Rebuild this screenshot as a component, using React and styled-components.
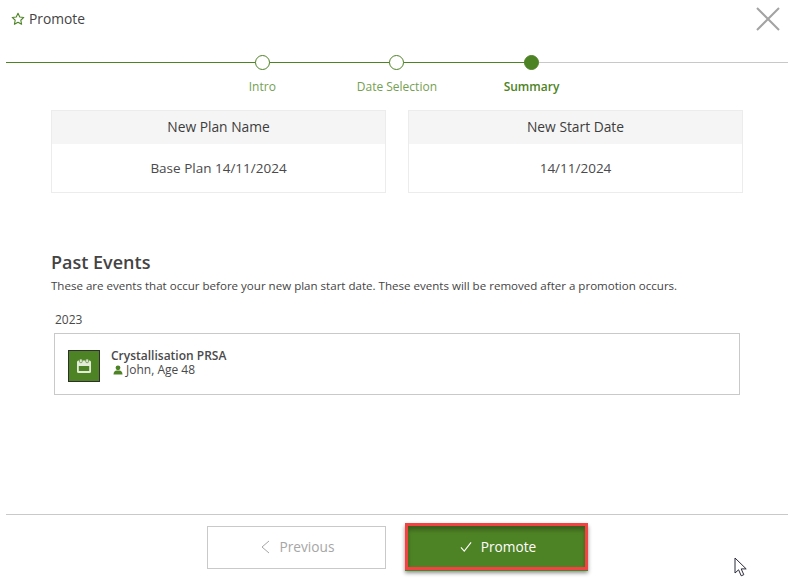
import styled, { createGlobalStyle } from "styled-components";

const GlobalStyle = createGlobalStyle`
  html, body {
    margin: 0;
    padding: 0;
    background: #fff;
  }
  body {
    font-family: "Open Sans", "Liberation Sans", sans-serif;
    color: #444;
  }
  * {
    box-sizing: border-box;
  }
`;

const GREEN = "#4e8325";

const Page = styled.div`
  position: relative;
  width: 793px;
  height: 585px;
  overflow: hidden;
  display: flex;
  flex-direction: column;
  padding: 0 5px 0 6px;
`;

const Header = styled.header`
  display: flex;
  align-items: center;
  justify-content: space-between;
  height: 38px;
  padding: 0 8px 0 5px;
`;

const HeaderTitle = styled.div`
  display: flex;
  align-items: center;
  gap: 4px;
  padding-bottom: 1px;
  font-size: 13.8px;
  font-weight: 500;
  color: #444;
`;

const CloseIcon = styled.svg`
  display: block;
  width: 24px;
  height: 24px;
  stroke: #a3a3a3;
  stroke-width: 2;
  fill: none;
`;

const Stepper = styled.div`
  display: grid;
  grid-template-columns: repeat(3, 134.6px);
  padding-left: 189px;
  margin-top: 17px;
  height: 40px;
  background:
    linear-gradient(to right, ${GREEN} 525px, #c8c8c8 525px) 0 7px / 100% 1px no-repeat;
`;

const Step = styled.div`
  display: flex;
  flex-direction: column;
  align-items: center;
`;

const StepDot = styled.span`
  width: 15px;
  height: 15px;
  border-radius: 50%;
  border: 1.5px solid ${GREEN};
  background: ${(p) => (p.$active ? GREEN : "#fff")};
`;

const StepLabel = styled.span`
  margin-top: 9px;
  font-size: 12px;
  line-height: 16px;
  white-space: nowrap;
  font-weight: ${(p) => (p.$active ? 600 : 400)};
  color: ${(p) => (p.$active ? GREEN : "#74a052")};
`;

const Content = styled.main`
  flex: 1;
  padding: 15px 45px 0;
`;

const Cards = styled.div`
  display: grid;
  grid-template-columns: 335px 335px;
  gap: 22px;
`;

const Card = styled.section`
  border: 1px solid #ececec;
  height: 83px;
`;

const CardHead = styled.div`
  height: 33px;
  display: flex;
  align-items: center;
  justify-content: center;
  padding-bottom: 2px;
  background: #f5f5f5;
  font-size: 13.8px;
  font-weight: 500;
  color: #3d3d3d;
`;

const CardValue = styled.div`
  height: 48px;
  display: flex;
  align-items: center;
  justify-content: center;
  font-size: 13.5px;
  color: #4a4a4a;
`;

const SectionTitle = styled.h2`
  margin: 57px 0 0;
  font-size: 18px;
  line-height: 24px;
  font-weight: 600;
  color: #444;
`;

const Description = styled.p`
  margin: 4px 0 0;
  font-size: 11.55px;
  line-height: 16px;
  color: #444;
  white-space: nowrap;
`;

const Year = styled.div`
  margin: 18px 0 0 4px;
  font-size: 12px;
  line-height: 16px;
  color: #4a4a4a;
`;

const EventRow = styled.div`
  margin: 5px 3px 0 3px;
  height: 62px;
  border: 1px solid #c9c9c9;
  display: flex;
  align-items: center;
  gap: 11px;
  padding: 3px 0 0 13px;
`;

const EventIcon = styled.div`
  width: 32px;
  height: 32px;
  background: ${GREEN};
  border: 1px solid #2f2f2f;
  display: flex;
  align-items: center;
  justify-content: center;
`;

const EventText = styled.div`
  display: flex;
  flex-direction: column;
  margin-top: -6px;
`;

const EventTitle = styled.div`
  font-size: 12px;
  line-height: 15px;
  font-weight: 600;
  color: #4a4a4a;
`;

const EventPerson = styled.div`
  display: flex;
  align-items: center;
  gap: 3px;
  padding-left: 2px;
  font-size: 12px;
  line-height: 14px;
  color: #4a4a4a;
`;

const Footer = styled.footer`
  height: 71px;
  border-top: 1px solid #c9c9c9;
  display: flex;
  align-items: flex-start;
  justify-content: center;
  gap: 19px;
  padding: 8px 0 0 1px;
`;

const Button = styled.button`
  font-family: inherit;
  display: flex;
  align-items: center;
  justify-content: center;
  gap: 9px;
  font-size: 13.7px;
`;

const PreviousButton = styled(Button)`
  width: 179px;
  height: 43px;
  margin-top: 3px;
  padding: 0 0 2px 1px;
  background: #fff;
  border: 1px solid #c9c9c9;
  color: #a6a6a6;
`;

const PromoteButton = styled(Button)`
  width: 183px;
  height: 47px;
  padding: 0 0 0 3px;
  background: ${GREEN};
  border: 3px solid #f44242;
  color: #fff;
  box-shadow: 0 1px 0 ${GREEN}, 0 3px 4px rgba(0, 0, 0, 0.45), inset 0 4px 4px rgba(0, 0, 0, 0.28);
`;

const Cursor = styled.svg`
  position: absolute;
  left: 734px;
  top: 557px;
  width: 15px;
  height: 21px;
`;

const StarIcon = () => (
  <svg width="14" height="14" viewBox="0 0 14 14" fill="none" stroke={GREEN} strokeWidth="1.1">
    <path d="M7 1.2l1.75 3.75 4.05.5-3 2.8.8 4.05L7 10.3l-3.6 2 .8-4.05-3-2.8 4.05-.5z" strokeLinejoin="round" />
  </svg>
);

const CalendarIcon = () => (
  <svg width="16" height="16" viewBox="0 0 16 16" fill="none">
    <rect x="1" y="2.5" width="14" height="12.5" rx="1.5" fill="#e3ecd8" />
    <rect x="2.8" y="8" width="10.4" height="5" fill={GREEN} />
    <rect x="3.6" y="1" width="2.6" height="3.6" rx="0.8" fill="#e3ecd8" stroke={GREEN} strokeWidth="0.7" />
    <rect x="9.8" y="1" width="2.6" height="3.6" rx="0.8" fill="#e3ecd8" stroke={GREEN} strokeWidth="0.7" />
  </svg>
);

const PersonIcon = () => (
  <svg width="10" height="10" viewBox="0 0 10 10" fill={GREEN}>
    <circle cx="5" cy="2.8" r="2.4" />
    <path d="M0.5 9.5c0-2.6 1.6-3.6 3-3.9h3c1.4.3 3 1.3 3 3.9z" />
  </svg>
);

const steps = [
  { label: "Intro" },
  { label: "Date Selection" },
  { label: "Summary", active: true },
];

const App = () => {
  return (
    <Page>
      <GlobalStyle />
      <Header>
        <HeaderTitle>
          <StarIcon />
          Promote
        </HeaderTitle>
        <CloseIcon viewBox="0 0 24 24">
          <path d="M1 1l22 22M23 1L1 23" />
        </CloseIcon>
      </Header>

      <Stepper>
        {steps.map((step) => (
          <Step key={step.label}>
            <StepDot $active={step.active} />
            <StepLabel $active={step.active}>{step.label}</StepLabel>
          </Step>
        ))}
      </Stepper>

      <Content>
        <Cards>
          <Card>
            <CardHead>New Plan Name</CardHead>
            <CardValue>Base Plan 14/11/2024</CardValue>
          </Card>
          <Card>
            <CardHead>New Start Date</CardHead>
            <CardValue>14/11/2024</CardValue>
          </Card>
        </Cards>

        <SectionTitle>Past Events</SectionTitle>
        <Description>
          These are events that occur before your new plan start date. These events will be removed after a promotion occurs.
        </Description>

        <Year>2023</Year>
        <EventRow>
          <EventIcon>
            <CalendarIcon />
          </EventIcon>
          <EventText>
            <EventTitle>Crystallisation PRSA</EventTitle>
            <EventPerson>
              <PersonIcon />
              John, Age 48
            </EventPerson>
          </EventText>
        </EventRow>
      </Content>

      <Footer>
        <PreviousButton>
          <svg width="11" height="14" viewBox="0 0 11 14" fill="none" stroke="#a6a6a6" strokeWidth="1">
            <path d="M9 1L2 7l7 6" />
          </svg>
          Previous
        </PreviousButton>
        <PromoteButton>
          <svg width="12" height="12" viewBox="0 0 13 12" fill="none" stroke="#fff" strokeWidth="1.2">
            <path d="M1 6.5l3.6 4L12 1" />
          </svg>
          Promote
        </PromoteButton>
      </Footer>

      <Cursor viewBox="0 0 15 21">
        <path d="M1 1v15l3.6-3.2 2.6 6 2.6-1.1-2.6-5.8h5z" fill="#fff" stroke="#2b2b3a" strokeWidth="1" />
      </Cursor>
    </Page>
  );
};

export default App;
